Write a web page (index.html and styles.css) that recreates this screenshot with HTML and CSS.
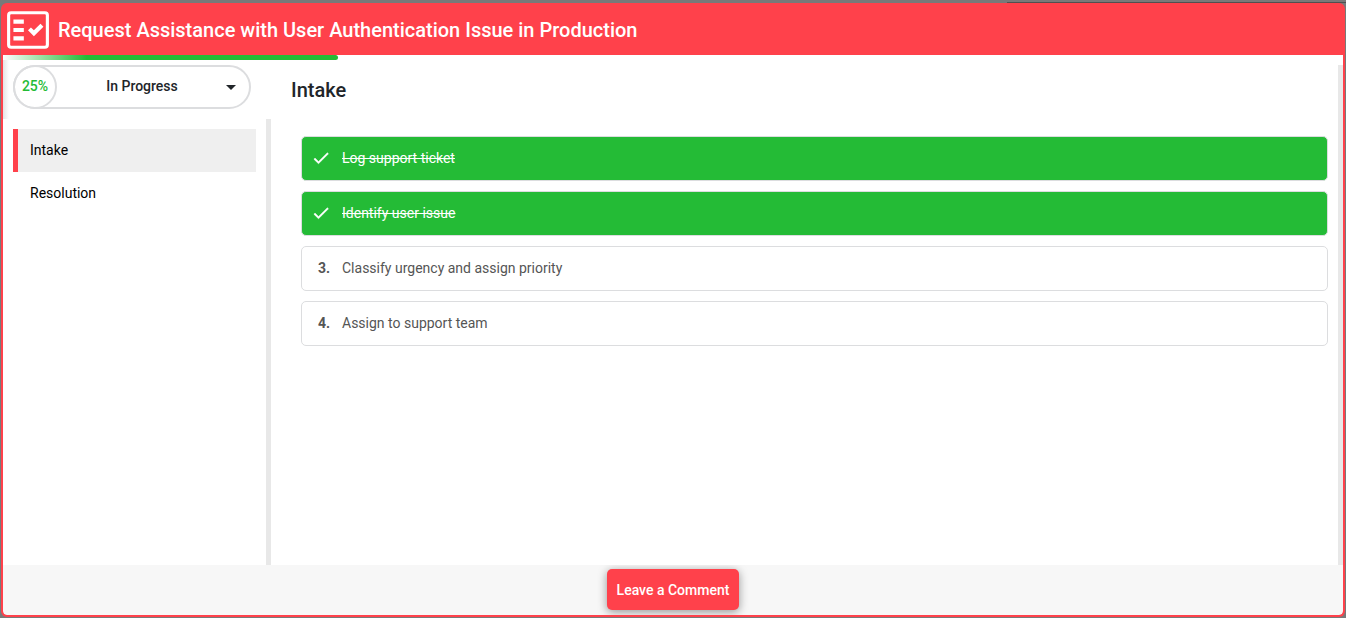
FILE: index.html
```html
<!DOCTYPE html>
<html lang="en">
<head>
<meta charset="utf-8">
<meta name="viewport" content="width=device-width, initial-scale=1">
<title>Request Assistance with User Authentication Issue in Production</title>
<link rel="stylesheet" href="styles.css">
</head>
<body>
<div class="dialog">
  <header class="dialog-header">
    <svg class="header-icon" viewBox="0 0 24 24" aria-hidden="true">
      <rect x="2.7" y="3.7" width="18.6" height="16.6" rx="1.2" fill="none" stroke="currentColor" stroke-width="1.5"/>
      <path fill="currentColor" d="M5 7h5v2H5zM5 11h5v2H5zM5 15h5v2H5zM19.41 10.42L17.99 9l-3.17 3.17-1.41-1.42L12 12.16 14.82 15z"/>
    </svg>
    <h1 class="title">Request Assistance with User Authentication Issue in Production</h1>
  </header>
  <div class="dialog-body">
    <div class="progress" role="progressbar" aria-label="Progress" aria-valuenow="25" aria-valuemin="0" aria-valuemax="100">
      <div class="progress-fill" style="width: 25%"></div>
    </div>
    <aside class="sidebar">
      <div class="status-area">
        <div class="status">
          <span class="percent">25%</span>
          <select class="status-select" aria-label="Status">
            <option>In Progress</option>
          </select>
          <svg class="caret" viewBox="0 0 10 5" aria-hidden="true"><path d="M0 0h10L5 5z" fill="currentColor"/></svg>
        </div>
      </div>
      <nav class="stages" aria-label="Stages">
        <a class="stage stage-active" href="#intake" aria-current="step">Intake</a>
        <a class="stage" href="#resolution">Resolution</a>
      </nav>
    </aside>
    <main class="content" id="intake">
      <h2 class="content-title">Intake</h2>
      <ol class="tasks">
        <li><button class="task task-done" type="button" aria-pressed="true">
          <svg class="check" viewBox="0 0 24 24" aria-hidden="true"><path fill="currentColor" stroke="currentColor" stroke-width=".5" d="M9 16.17L4.83 12l-1.42 1.41L9 19 21 7l-1.41-1.41z"/></svg>
          <span class="task-name">Log support ticket</span></button></li>
        <li><button class="task task-done" type="button" aria-pressed="true">
          <svg class="check" viewBox="0 0 24 24" aria-hidden="true"><path fill="currentColor" stroke="currentColor" stroke-width=".5" d="M9 16.17L4.83 12l-1.42 1.41L9 19 21 7l-1.41-1.41z"/></svg>
          <span class="task-name">Identify user issue</span></button></li>
        <li><button class="task" type="button" aria-pressed="false">
          <span class="number">3.</span><span class="task-name">Classify urgency and assign priority</span></button></li>
        <li><button class="task" type="button" aria-pressed="false">
          <span class="number">4.</span><span class="task-name">Assign to support team</span></button></li>
      </ol>
    </main>
  </div>
  <footer class="dialog-footer">
    <button class="comment-button" type="button">Leave a Comment</button>
  </footer>
</div>
</body>
</html>
```
FILE: styles.css
```css
* {
  box-sizing: border-box;
}

body {
  margin: 0;
  min-height: 100vh;
  padding: 3px 1px 1px;
  display: flex;
  background:
    linear-gradient(#505050, #505050) 1007px 2px / 100% 1px no-repeat,
    #797979;
  font-family: Roboto, "Liberation Sans", sans-serif;
  font-size: 14px;
  line-height: 20px;
  color: #212529;
}

button,
select {
  font: inherit;
}

.dialog {
  flex: 1;
  display: flex;
  flex-direction: column;
  border: 2px solid #ff414b;
  border-top: 0;
  border-radius: 6px;
  background: #ff414b;
  overflow: hidden;
}

.dialog-header {
  display: flex;
  align-items: center;
  gap: 5px;
  padding: 2px 0 0;
  color: #fff;
}

.header-icon {
  width: 50px;
  height: 50px;
}

.title {
  margin: 0;
  font-size: 20px;
  line-height: 24px;
  font-weight: 500;
}

.dialog-body {
  position: relative;
  flex: 1;
  display: grid;
  grid-template-columns: 1fr 4fr;
  background: #fff;
}

.progress {
  position: absolute;
  top: 0;
  left: 0;
  width: 100%;
  height: 5px;
}

.progress-fill {
  height: 100%;
  border-radius: 0 3px 3px 0;
  background: linear-gradient(90deg, #fff 0, #24bb36 25%);
}

.sidebar {
  display: flex;
  flex-direction: column;
}

.status-area {
  padding: 10px 20px 10px 10px;
  background: linear-gradient(90deg, #e4e4e4, #fff 6px);
}

.status {
  position: relative;
  height: 44px;
  display: flex;
  border: 2px solid #dcdddf;
  border-radius: 22px;
  background: #fff;
}

.percent {
  flex: none;
  width: 44px;
  height: 44px;
  margin: -2px 0 0 -2px;
  border: 2px solid #dcdddf;
  border-radius: 50%;
  line-height: 39px;
  text-align: center;
  font-weight: 500;
  color: #24bb36;
}

.status-select {
  flex: 1;
  min-width: 0;
  padding: 0 22px 3px 0;
  border: 0;
  appearance: none;
  background: none;
  color: #212529;
  font-weight: 500;
  text-align: center;
  text-align-last: center;
}

.caret {
  position: absolute;
  top: 18px;
  right: 13px;
  width: 10px;
  height: 5px;
  pointer-events: none;
}

.stages {
  flex: 1;
  padding: 10px;
  border-right: 5px solid #e8e8e8;
}

.stage {
  display: block;
  padding: 11px 12px 12px;
  border-left: 5px solid transparent;
  color: #000;
  text-decoration: none;
}

.stage-active {
  border-left-color: #ff414b;
  background: #efefef;
}

.content {
  padding: 23px 15px 10px 20px;
  background: linear-gradient(#e8e8e8, #e8e8e8) right 10px / 5px 100% no-repeat;
}

.content-title {
  margin: 0;
  font-size: 20px;
  line-height: 24px;
  font-weight: 500;
}

.tasks {
  display: grid;
  gap: 10px;
  margin: 34px 0 0;
  padding: 0 0 0 10px;
  list-style: none;
}

.task {
  display: flex;
  align-items: center;
  width: 100%;
  height: 45px;
  padding: 0 10px 2px;
  border: 1px solid #dcdddf;
  border-radius: 5px;
  background: #fff;
  color: #555;
  text-align: left;
}

.task-done {
  padding-left: 9px;
  background: #24bb36;
  color: #fff;
}

.task-done .task-name {
  text-decoration: line-through;
}

.check {
  width: 20px;
  height: 20px;
  margin-right: 11px;
}

.number {
  width: 30px;
  padding-left: 6px;
  font-weight: 700;
}

.dialog-footer {
  display: flex;
  justify-content: center;
  align-items: center;
  height: 50px;
  padding-bottom: 1px;
  background: #f7f7f7;
  border-radius: 0 0 4px 4px;
}

.comment-button {
  height: 41px;
  padding: 0 10px;
  border: 0;
  border-radius: 5px;
  background: #ff414b;
  box-shadow: 0 2px 10px rgba(0, 0, 0, 0.4);
  color: #fff;
  font-weight: 500;
}
```
